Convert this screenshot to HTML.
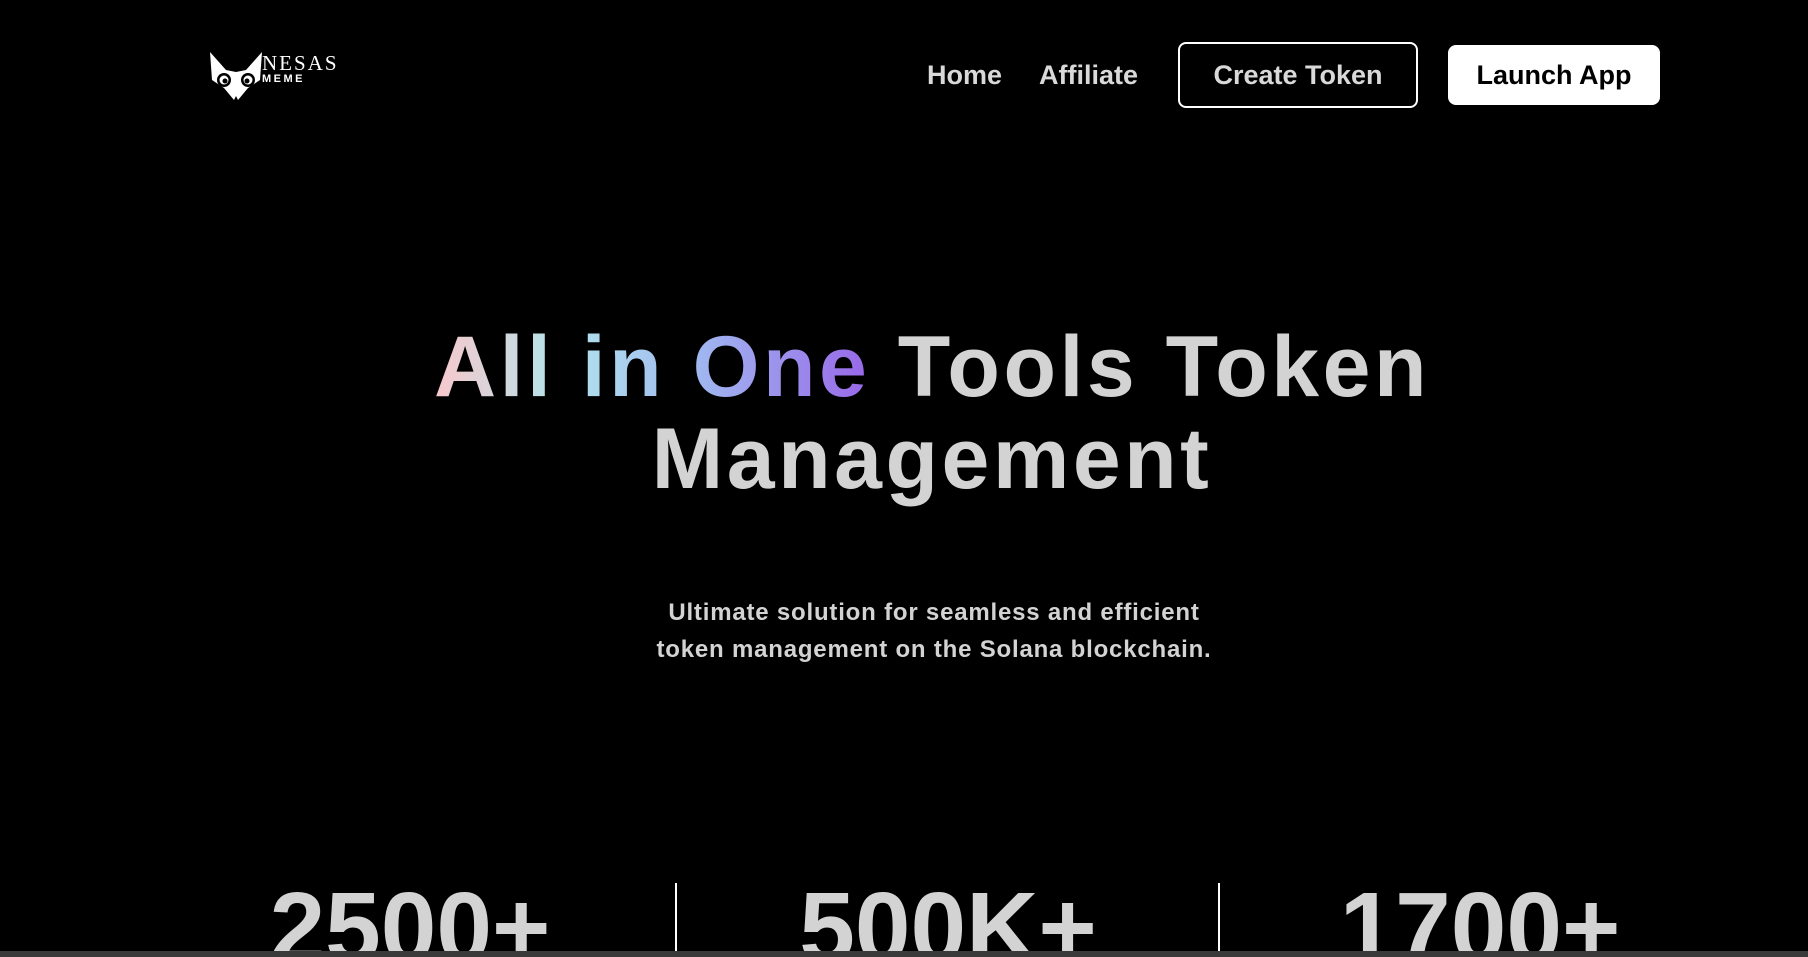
<!DOCTYPE html>
<html><head><meta charset="utf-8"><style>
*{margin:0;padding:0;box-sizing:border-box}
html,body{width:1808px;height:957px;background:#000;overflow:hidden;font-family:"Liberation Sans",sans-serif;color:#d3d3d3}
#w{position:relative;width:1808px;height:957px;overflow:hidden}
.nav{position:absolute;top:0;left:0;width:1808px;height:150px}
.nav a{position:absolute;font-weight:bold;font-size:27px;color:#d9d9d9;text-decoration:none;white-space:nowrap}
.btn1{left:1178px;top:42px;width:240px;height:66px;border:2.5px solid #fff;border-radius:8px;display:flex;align-items:center;justify-content:center}
.btn2{left:1448px;top:45px;width:212px;height:60px;background:#fff;color:#000!important;border-radius:8px;display:flex;align-items:center;justify-content:center}
h1{position:absolute;left:56px;width:1752px;text-align:center;font-size:86px;font-weight:bold;line-height:92px;top:321px;color:#d3d3d3;letter-spacing:3.5px}
.g{background:linear-gradient(90deg,#f8c8cc 0%,#b2e4ec 30%,#a0b8f0 60%,#9868e8 100%);-webkit-background-clip:text;background-clip:text;color:transparent}
.sub{position:absolute;left:60px;width:1748px;text-align:center;top:594px;font-size:24px;font-weight:bold;line-height:37px;color:#d3d3d3;letter-spacing:0.8px}
.stat{position:absolute;top:878px;font-size:100px;font-weight:bold;color:#d3d3d3;line-height:1;text-align:center;width:400px}
.div{position:absolute;top:883px;width:2px;height:75px;background:#fff}
.bar{position:absolute;left:0;top:951px;width:1808px;height:6px;background:#3a3a3a}
</style></head><body><div id="w">
<div class="nav">
<svg style="position:absolute;left:208px;top:50px" width="56" height="52" viewBox="0 0 56 52">
<path d="M2 2 L18 20 L28 22 L38 20 L54 2 L52 30 L40 38 L30 50 L28 46 L26 50 L16 38 L4 30 Z" fill="#fff"/>
<circle cx="16" cy="30" r="7" fill="#000"/><circle cx="16" cy="30" r="4.5" fill="#fff"/><circle cx="17" cy="31" r="2.5" fill="#000"/>
<circle cx="40" cy="30" r="7" fill="#000"/><circle cx="40" cy="30" r="4.5" fill="#fff"/><circle cx="39" cy="31" r="2.5" fill="#000"/>
</svg>
<div style="position:absolute;left:262px;top:51px;font-family:'Liberation Serif',serif;font-size:21px;color:#fff;letter-spacing:2px">NESAS</div>
<div style="position:absolute;left:262px;top:73px;font-size:11px;font-weight:bold;color:#fff;letter-spacing:2.5px">MEME</div>
<a style="left:927px;top:60px">Home</a>
<a style="left:1039px;top:60px">Affiliate</a>
<a class="btn1">Create Token</a>
<a class="btn2">Launch App</a>
</div>
<h1><span class="g">All in One</span> Tools Token<br>Management</h1>
<div class="sub">Ultimate solution for seamless and efficient<br>token management on the Solana blockchain.</div>
<div class="stat" style="left:210px">2500+</div>
<div class="div" style="left:675px"></div>
<div class="stat" style="left:748px">500K+</div>
<div class="div" style="left:1218px"></div>
<div class="stat" style="left:1280px">1700+</div>
<div class="bar"></div>
</div></body></html>
